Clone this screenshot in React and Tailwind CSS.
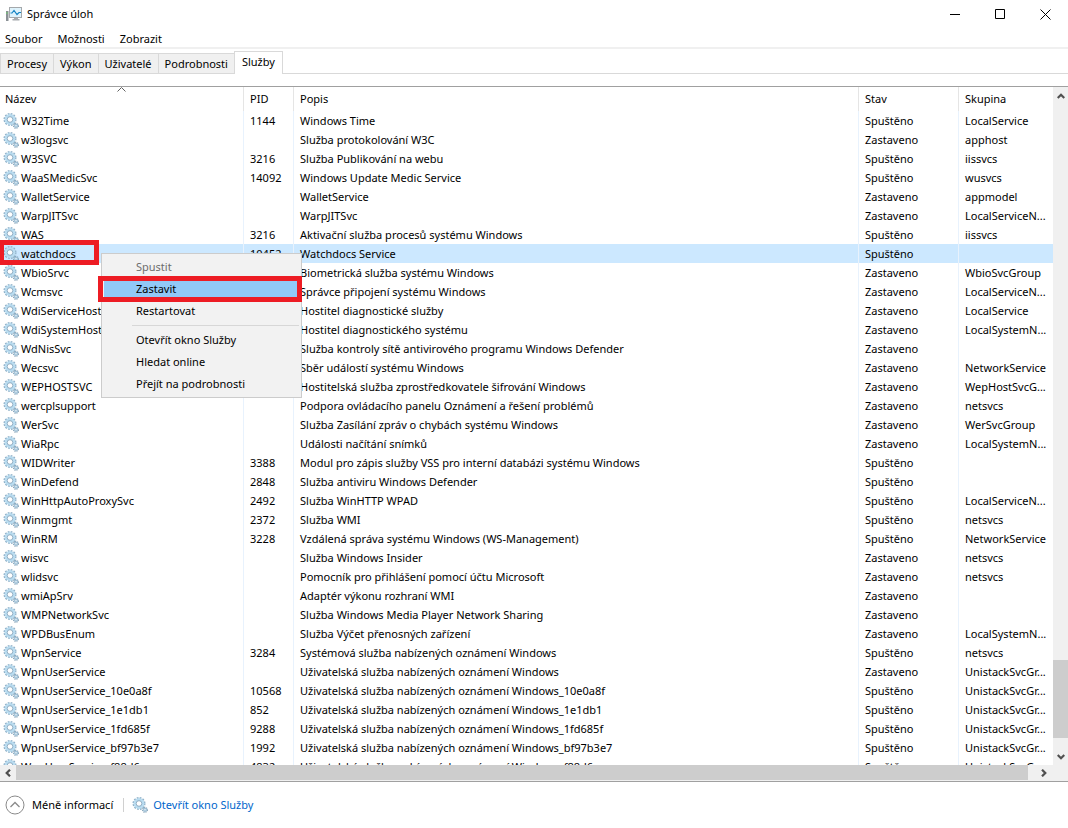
import React, { useState } from 'react';

const menuItems = ['Soubor', 'Možnosti', 'Zobrazit'];
const tabs = ['Procesy', 'Výkon', 'Uživatelé', 'Podrobnosti', 'Služby'];

const ON = 'Spuštěno';
const OFF = 'Zastaveno';
const userSvc = 'Uživatelská služba nabízených oznámení Windows';

// name, pid, description, status, group
const services = [
  ['W32Time', '1144', 'Windows Time', ON, 'LocalService'],
  ['w3logsvc', '', 'Služba protokolování W3C', OFF, 'apphost'],
  ['W3SVC', '3216', 'Služba Publikování na webu', ON, 'iissvcs'],
  ['WaaSMedicSvc', '14092', 'Windows Update Medic Service', ON, 'wusvcs'],
  ['WalletService', '', 'WalletService', OFF, 'appmodel'],
  ['WarpJITSvc', '', 'WarpJITSvc', OFF, 'LocalServiceN...'],
  ['WAS', '3216', 'Aktivační služba procesů systému Windows', ON, 'iissvcs'],
  ['watchdocs', '10452', 'Watchdocs Service', ON, ''],
  ['WbioSrvc', '', 'Biometrická služba systému Windows', OFF, 'WbioSvcGroup'],
  ['Wcmsvc', '', 'Správce připojení systému Windows', OFF, 'LocalServiceN...'],
  ['WdiServiceHost', '', 'Hostitel diagnostické služby', OFF, 'LocalService'],
  ['WdiSystemHost', '', 'Hostitel diagnostického systému', OFF, 'LocalSystemN...'],
  ['WdNisSvc', '', 'Služba kontroly sítě antivirového programu Windows Defender', OFF, ''],
  ['Wecsvc', '', 'Sběr událostí systému Windows', OFF, 'NetworkService'],
  ['WEPHOSTSVC', '', 'Hostitelská služba zprostředkovatele šifrování Windows', OFF, 'WepHostSvcG...'],
  ['wercplsupport', '', 'Podpora ovládacího panelu Oznámení a řešení problémů', OFF, 'netsvcs'],
  ['WerSvc', '', 'Služba Zasílání zpráv o chybách systému Windows', OFF, 'WerSvcGroup'],
  ['WiaRpc', '', 'Události načítání snímků', OFF, 'LocalSystemN...'],
  ['WIDWriter', '3388', 'Modul pro zápis služby VSS pro interní databázi systému Windows', ON, ''],
  ['WinDefend', '2848', 'Služba antiviru Windows Defender', ON, ''],
  ['WinHttpAutoProxySvc', '2492', 'Služba WinHTTP WPAD', ON, 'LocalServiceN...'],
  ['Winmgmt', '2372', 'Služba WMI', ON, 'netsvcs'],
  ['WinRM', '3228', 'Vzdálená správa systému Windows (WS-Management)', ON, 'NetworkService'],
  ['wisvc', '', 'Služba Windows Insider', OFF, 'netsvcs'],
  ['wlidsvc', '', 'Pomocník pro přihlášení pomocí účtu Microsoft', OFF, 'netsvcs'],
  ['wmiApSrv', '', 'Adaptér výkonu rozhraní WMI', OFF, ''],
  ['WMPNetworkSvc', '', 'Služba Windows Media Player Network Sharing', OFF, ''],
  ['WPDBusEnum', '', 'Služba Výčet přenosných zařízení', OFF, 'LocalSystemN...'],
  ['WpnService', '3284', 'Systémová služba nabízených oznámení Windows', ON, 'netsvcs'],
  ['WpnUserService', '', userSvc, OFF, 'UnistackSvcGr...'],
  ['WpnUserService_10e0a8f', '10568', `${userSvc}_10e0a8f`, ON, 'UnistackSvcGr...'],
  ['WpnUserService_1e1db1', '852', `${userSvc}_1e1db1`, ON, 'UnistackSvcGr...'],
  ['WpnUserService_1fd685f', '9288', `${userSvc}_1fd685f`, ON, 'UnistackSvcGr...'],
  ['WpnUserService_bf97b3e7', '1992', `${userSvc}_bf97b3e7`, ON, 'UnistackSvcGr...'],
  ['WpnUserService_f88d6', '4832', `${userSvc}_f88d6`, ON, 'UnistackSvcGr...'],
];

const GearIcon = () => (
  <svg className="size-4 shrink-0" viewBox="0 0 16 16" fill="none" aria-hidden="true">
    <circle cx="7" cy="6.5" r="5.5" stroke="#8fb0c8" strokeWidth="2" strokeDasharray="1.7 1.18" />
    <circle cx="7" cy="6.5" r="4" stroke="#b9dcf0" strokeWidth="2.8" />
    <circle cx="7" cy="6.5" r="2.8" stroke="#7d9db5" strokeWidth="0.8" fill="#fff" />
    <circle cx="13" cy="12.8" r="2.3" stroke="#7f9db3" strokeWidth="1.4" strokeDasharray="1.05 0.75" />
    <circle cx="13" cy="12.8" r="1.4" stroke="#a0c2d8" strokeWidth="1.4" fill="#fff" />
  </svg>
);

const AppIcon = () => (
  <svg className="size-4" viewBox="0 0 16 16" aria-hidden="true">
    <rect x="0" y="5" width="2.5" height="10" fill="#8b9196" />
    <rect x="0.5" y="6" width="1" height="2" fill="#6fd06f" />
    <rect x="3.5" y="1.5" width="12" height="10" fill="#dff3fc" stroke="#a4a8ab" />
    <path d="M4.5 7h1.5l2-2.5 3 4 2-2h2" fill="none" stroke="#1684c4" strokeWidth="1.2" />
    <path d="M8 12h4v1h1.5v1.5h-7V13H8z" fill="#a5aaae" />
  </svg>
);

const Chevron = ({ className = '' }) => (
  <svg className={`size-2 ${className}`} viewBox="0 0 8 8" fill="none" aria-hidden="true">
    <path d="M.7 6L4 2.7 7.3 6" stroke="#505050" strokeWidth="2.2" />
  </svg>
);

const ContextItem = ({ label, disabled, active }) => (
  <button
    role="menuitem"
    disabled={disabled}
    className={`block h-[22px] w-full pl-8 text-left ${active ? 'bg-[#91c9f7]' : ''} ${disabled ? 'text-[#6d6d6d]' : ''}`}
  >
    {label}
  </button>
);

const ContextMenu = () => (
  <div role="menu" className="absolute left-[101px] top-[166px] w-[201px] border border-[#ccc] bg-[#f2f2f2] p-0.5">
    <ContextItem label="Spustit" disabled />
    <div className="relative">
      <ContextItem label="Zastavit" active />
      <div className="absolute -left-1.5 -right-[3px] -inset-y-0.5 border-5 border-[#ed1c24] pointer-events-none" />
    </div>
    <ContextItem label="Restartovat" />
    <div className="my-[3px] ml-7 h-px bg-[#d7d7d7]" />
    <ContextItem label="Otevřít okno Služby" />
    <ContextItem label="Hledat online" />
    <ContextItem label="Přejít na podrobnosti" />
  </div>
);

const TitleBar = () => (
  <header className="flex h-7 items-center pl-1.5">
    <AppIcon />
    <h1 className="ml-[5px]">Správce úloh</h1>
    <div className="ml-auto flex h-full">
      <button aria-label="Minimalizovat" className="flex w-[45px] items-center justify-center">
        <svg className="size-[11px]" viewBox="0 0 11 11"><path d="M0 5.5h10" stroke="#000" /></svg>
      </button>
      <button aria-label="Maximalizovat" className="flex w-[45px] items-center justify-center">
        <svg className="size-[11px]" viewBox="0 0 11 11"><path d="M.5.5h9v9h-9z" fill="none" stroke="#000" /></svg>
      </button>
      <button aria-label="Zavřít" className="flex w-[45px] items-center justify-center">
        <svg className="size-[11px]" viewBox="0 0 11 11"><path d="M.5.5l10 10M10.5.5l-10 10" stroke="#000" /></svg>
      </button>
    </div>
  </header>
);

const App = () => {
  const [tab, setTab] = useState('Služby');
  const [selected, setSelected] = useState('watchdocs');

  return (
    <div className="flex h-screen flex-col overflow-hidden bg-white font-['Noto_Sans','Open_Sans',sans-serif] text-[11px] leading-4 text-black">
      <TitleBar />

      <nav className="flex h-[21px] items-end gap-[15px] border-b-2 border-[#f0f0f0] pl-[5px]">
        {menuItems.map((item) => (
          <button key={item}>{item}</button>
        ))}
      </nav>

      <div className="mt-0.5 flex items-end border-b border-[#d9d9d9]" role="tablist">
        {tabs.map((t) => (
          <button
            key={t}
            role="tab"
            aria-selected={tab === t}
            onClick={() => setTab(t)}
            className={`border-[#d9d9d9] ${
              tab === t
                ? '-mb-px h-[23px] border-x border-t bg-white px-[7px] pb-0.5'
                : 'h-5 border-l border-t bg-[#f0f0f0] px-1.5'
            }`}
          >
            {t}
          </button>
        ))}
      </div>

      <main className="relative mt-3 flex min-h-0 flex-1 flex-col border-y border-[#a0a0a0]">
        <div className="flex min-h-0 flex-1">
          <div className="min-w-0 flex-1 overflow-hidden">
            <table className="w-full table-fixed border-separate border-spacing-0">
              <colgroup>
                <col className="w-[244px]" />
                <col className="w-[50px]" />
                <col />
                <col className="w-[100px]" />
                <col className="w-[94px]" />
              </colgroup>
              <thead>
                <tr className="h-6 text-left">
                  <th className="relative border-r border-[#e5e5e5] p-0 pl-[5px] font-normal">
                    <svg className="absolute left-[117px] top-0 h-[5px] w-[9px]" viewBox="0 0 9 5" fill="none">
                      <path d="M.5 4.5l4-4 4 4" stroke="#606060" />
                    </svg>
                    Název
                  </th>
                  <th className="border-r border-[#e5e5e5] p-0 pl-1.5 font-normal">PID</th>
                  <th className="border-r border-[#e5e5e5] p-0 pl-1.5 font-normal">Popis</th>
                  <th className="border-r border-[#e5e5e5] p-0 pl-1.5 font-normal">Stav</th>
                  <th className="p-0 pl-1.5 font-normal">Skupina</th>
                </tr>
              </thead>
              <tbody>
                {services.map(([name, pid, desc, status, group]) => (
                  <tr
                    key={name}
                    onClick={() => setSelected(name)}
                    className={`h-[19px] whitespace-nowrap ${selected === name ? 'bg-[#cce8ff]' : ''}`}
                  >
                    <td className="border-r border-[#e8f2fd] p-0 pl-[3px]">
                      <div className="flex items-center gap-0.5">
                        <GearIcon />
                        {name}
                      </div>
                    </td>
                    <td className="border-r border-[#e8f2fd] p-0 pl-1.5">{pid}</td>
                    <td className="border-r border-[#e8f2fd] p-0 pl-1.5">{desc}</td>
                    <td className="border-r border-[#e8f2fd] p-0 pl-1.5">{status}</td>
                    <td className="p-0 pl-1.5">{group}</td>
                  </tr>
                ))}
              </tbody>
            </table>
          </div>

          <div className="flex w-[15px] shrink-0 flex-col bg-[#f0f0f0]">
            <button aria-label="Nahoru" className="flex h-[17px] items-center justify-center">
              <Chevron />
            </button>
            <div className="flex-1" />
            <div className="mb-2.5 h-[78px] bg-[#cdcdcd]" />
            <button aria-label="Dolů" className="flex h-[17px] items-center justify-center">
              <Chevron className="rotate-180" />
            </button>
          </div>
        </div>

        <div className="flex h-4 shrink-0 bg-[#f0f0f0]">
          <button aria-label="Doleva" className="flex w-4 items-center justify-center">
            <Chevron className="-rotate-90" />
          </button>
          <div className="mb-px flex-1 bg-[#cdcdcd]" />
          <button aria-label="Doprava" className="mr-4 flex w-6 items-center justify-end pr-1">
            <Chevron className="rotate-90" />
          </button>
        </div>

        <div className="pointer-events-none absolute left-0 top-[153px] h-[25px] w-[99px] border-5 border-l-4 border-[#ed1c24]" />
        <ContextMenu />
      </main>

      <footer className="flex h-[46px] shrink-0 items-center pl-[5px]">
        <button className="flex items-center gap-[7px]">
          <svg className="size-5" viewBox="0 0 20 20" fill="none" aria-hidden="true">
            <circle cx="10" cy="10" r="9" stroke="#8a8a8a" />
            <path d="M5.5 12L10 7.5l4.500 4.500" stroke="#8a8a8a" strokeWidth="1.3" />
          </svg>
          Méně informací
        </button>
        <div className="ml-2.5 mr-2 h-3.5 w-px bg-[#d0d0d0]" />
        <GearIcon />
        <a href="#sluzby" className="ml-[5px] text-[#0066cc]">Otevřít okno Služby</a>
      </footer>
    </div>
  );
};

export default App;
